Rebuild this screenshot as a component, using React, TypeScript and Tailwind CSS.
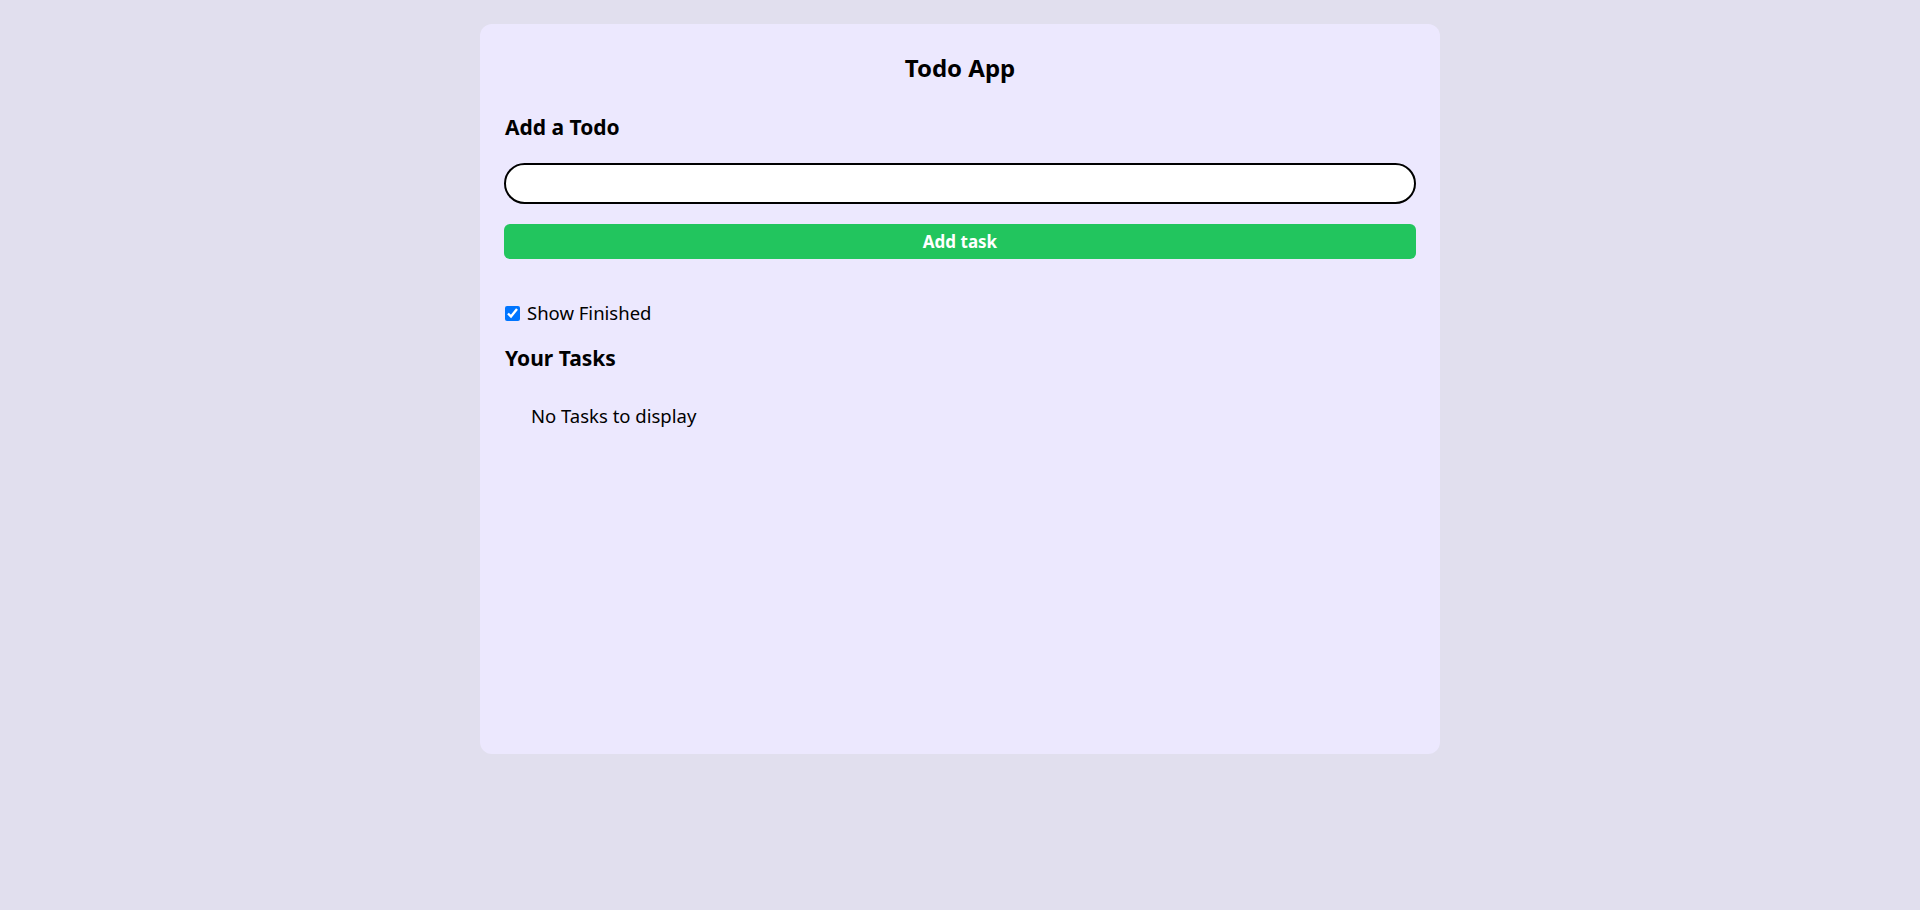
import { useState } from 'react'

// Petite app de tâches : un champ, un bouton, un filtre et la liste
export default function App() {
  const [todo, setTodo] = useState('')
  const [todos, setTodos] = useState<{ id: number; text: string; done: boolean }[]>([])
  const [showFinished, setShowFinished] = useState(true)

  const handleAdd = () => {
    if (!todo.trim()) return
    setTodos([...todos, { id: Date.now(), text: todo, done: false }])
    setTodo('')
  }

  const visible = todos.filter((t) => showFinished || !t.done)

  return (
    <div
      className="min-h-screen bg-[#e1dfee] pt-6 text-black"
      style={{ fontFamily: '"Noto Sans", "Open Sans", Arial, sans-serif' }}
    >
      <div className="mx-auto min-h-[730px] w-1/2 rounded-xl bg-[#ece8fe] p-6">
        <h1 className="mt-1 text-center text-2xl font-bold">Todo App</h1>

        {/* Ajout d'une tâche */}
        <h2 className="mt-[29px] pl-px text-[21px] leading-7 font-bold">Add a Todo</h2>
        <input
          autoFocus
          value={todo}
          onChange={(e) => setTodo(e.target.value)}
          className="mt-[22px] block h-[41px] w-full rounded-full border-2 border-black bg-white px-6 text-base outline-none"
        />
        <button
          onClick={handleAdd}
          className="mt-5 block h-[35px] w-full rounded-md bg-[#22c55e] text-[17px] font-bold text-white"
        >
          Add task
        </button>

        {/* Filtre */}
        <label className="mt-10 flex items-center gap-[7px] pl-px text-[18.5px] leading-7">
          <input
            type="checkbox"
            checked={showFinished}
            onChange={() => setShowFinished(!showFinished)}
            className="h-[15px] w-[15px] accent-[#0075ff]"
          />
          Show Finished
        </label>

        <h2 className="mt-[17px] pl-px text-[21px] leading-7 font-bold">Your Tasks</h2>
        <div className="mt-[30px] ml-[27px] text-[18.5px] leading-7">
          {visible.length === 0 && <div>No Tasks to display</div>}
          {visible.map((t) => (
            <div key={t.id} className="flex items-center gap-3">
              <input
                type="checkbox"
                checked={t.done}
                onChange={() =>
                  setTodos(todos.map((x) => (x.id === t.id ? { ...x, done: !x.done } : x)))
                }
              />
              <span className={t.done ? 'line-through' : ''}>{t.text}</span>
            </div>
          ))}
        </div>
      </div>
    </div>
  )
}
